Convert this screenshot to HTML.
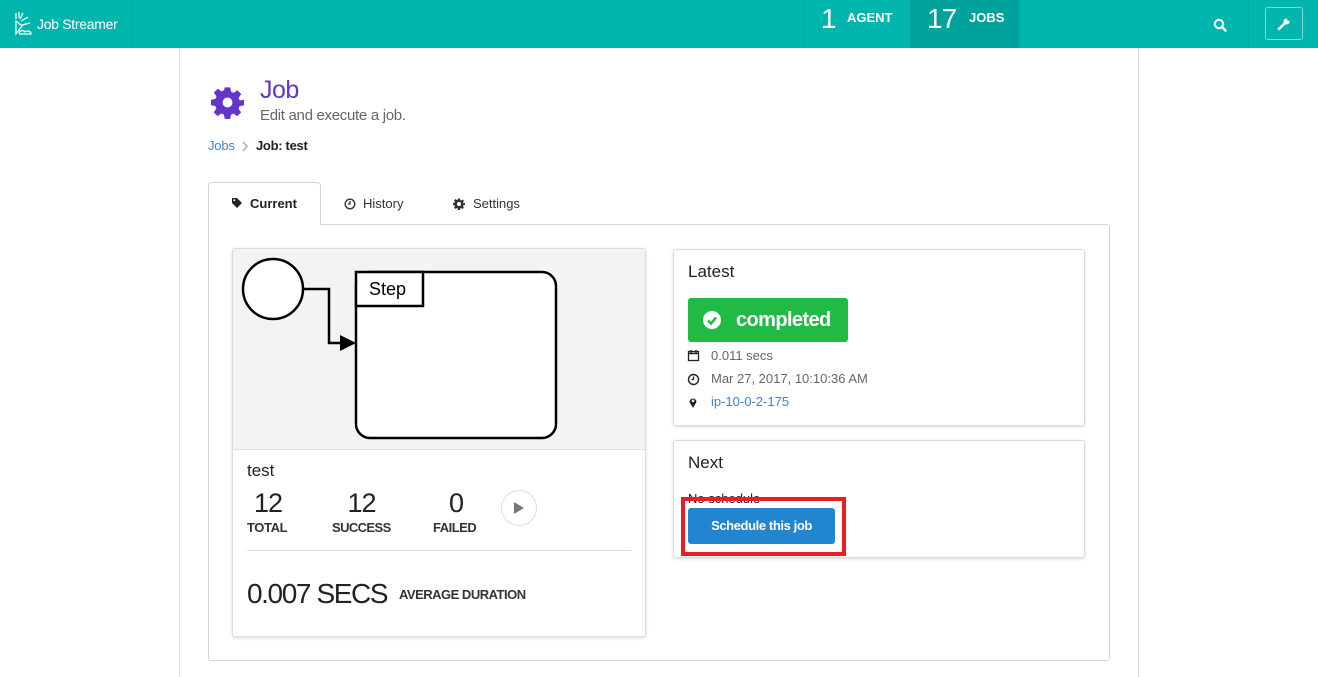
<!DOCTYPE html>
<html><head><meta charset="utf-8"><style>
*{box-sizing:border-box;margin:0;padding:0}
body{width:1318px;height:677px;overflow:hidden;background:#fff;font-family:"Liberation Sans",sans-serif;color:#222;position:relative}
.a{position:absolute}
.hdr{left:0;top:0;width:1318px;height:48px;background:#00b5ad}
.muted{color:#666}
.card{background:#fff;border:1px solid #dcdcdc;border-radius:3px;box-shadow:0 1px 3px rgba(0,0,0,.15)}
</style></head><body>
<div class="a hdr"></div>
<div class="a" style="left:131px;top:0;width:1px;height:48px;background:#00a7a0"></div>
<div class="a" style="left:804px;top:0;width:1px;height:48px;background:#00a7a0"></div>
<div class="a" style="left:910px;top:0;width:109px;height:48px;background:#00a29b"></div>
<div class="a" style="left:1248px;top:0;width:1px;height:48px;background:#00a7a0"></div>
<svg class="a" style="left:13px;top:11px" width="24" height="26" viewBox="0 0 24 26" fill="none" stroke="#fff" stroke-width="1.2">
<path d="M3 2v6M6 1v6M10 2l-3 6M15 6l-7 4M17 12l-8 2M3 10l6 5-6 8z M6 22c1-3 5-3 6-1c2-2 6-1 6 2H6"/></svg>
<div class="a" style="left:37px;top:16px;color:#fff;font-size:14px;letter-spacing:-0.3px">Job Streamer</div>
<div class="a" style="left:821px;top:3px;color:#fff;font-size:28px">1</div>
<div class="a" style="left:847px;top:10px;color:#fff;font-size:13px;font-weight:bold">AGENT</div>
<div class="a" style="left:927px;top:3px;color:#fff;font-size:28px;letter-spacing:-1px">17</div>
<div class="a" style="left:969px;top:10px;color:#fff;font-size:13px;font-weight:bold">JOBS</div>
<svg class="a" style="left:1213px;top:18px" width="14" height="14" viewBox="0 0 14 14"><circle cx="6" cy="6" r="4.2" fill="none" stroke="#fff" stroke-width="2"/><path d="M9 9l3.5 3.5" stroke="#fff" stroke-width="2.4" stroke-linecap="round"/></svg>
<div class="a" style="left:1265px;top:7px;width:38px;height:33px;border:1px solid #7fdad6;border-radius:3px"></div>
<svg class="a" style="left:1276px;top:16px" width="16" height="16" viewBox="0 0 16 16"><path d="M3 13l6-6" stroke="#fff" stroke-width="2.6" stroke-linecap="round"/><circle cx="10.5" cy="5.5" r="3" fill="#fff"/><circle cx="12.5" cy="3.5" r="1.4" fill="#00b5ad"/></svg>

<div class="a" style="left:179px;top:48px;width:1px;height:629px;background:#ddd"></div>
<div class="a" style="left:1138px;top:48px;width:1px;height:629px;background:#ddd"></div>

<svg class="a" style="left:211px;top:86px" width="33" height="33" viewBox="0 0 24 24"><path fill="#6435c9" d="M10 1h4l.6 3.2 1.9.8 2.7-1.9 2.8 2.8-1.9 2.7.8 1.9L24 10v4l-3.2.6-.8 1.9 1.9 2.7-2.8 2.8-2.7-1.9-1.9.8L14 24h-4l-.6-3.2-1.9-.8-2.7 1.9-2.8-2.8 1.9-2.7-.8-1.9L0 14v-4l3.2-.6.8-1.9-1.9-2.7 2.8-2.8 2.7 1.9 1.9-.8z"/><circle cx="12" cy="12" r="3.6" fill="#fff"/></svg>
<div class="a" style="left:260px;top:76px;font-size:25px;color:#6435c9;letter-spacing:-0.5px">Job</div>
<div class="a muted" style="left:260px;top:107px;font-size:15px;letter-spacing:-0.3px">Edit and execute a job.</div>
<div class="a" style="left:208px;top:138px;font-size:13px;color:#4183c4;letter-spacing:-0.2px">Jobs</div>
<svg class="a" style="left:241px;top:141px" width="8" height="11"><path d="M2 1l4 4.5L2 10" stroke="#bbb" stroke-width="2" fill="none"/></svg>
<div class="a" style="left:256px;top:138px;font-size:13px;font-weight:bold;letter-spacing:-0.3px">Job: test</div>

<div class="a" style="left:208px;top:224px;width:902px;height:437px;border:1px solid #d4d4d5;border-radius:0 3px 3px 3px"></div>
<div class="a" style="left:208px;top:182px;width:113px;height:43px;border:1px solid #d4d4d5;border-bottom:none;border-radius:4px 4px 0 0;background:#fff"></div>
<svg class="a" style="left:231px;top:197px" width="12" height="12" viewBox="0 0 12 12"><path d="M1 1h5l5 5-5 5-5-5z" fill="#222"/><circle cx="3.3" cy="3.3" r="1" fill="#fff"/></svg>
<div class="a" style="left:250px;top:196px;font-size:13px;font-weight:bold">Current</div>
<svg class="a" style="left:344px;top:198px" width="12" height="12" viewBox="0 0 12 12"><circle cx="6" cy="6" r="4.8" fill="none" stroke="#333" stroke-width="1.4"/><path d="M6 3v3h-2" stroke="#333" stroke-width="1.3" fill="none"/></svg>
<div class="a" style="left:363px;top:196px;font-size:13px;color:#333">History</div>
<svg class="a" style="left:453px;top:198px" width="12" height="12" viewBox="0 0 24 24"><path fill="#333" d="M10 1h4l.6 3.2 1.9.8 2.7-1.9 2.8 2.8-1.9 2.7.8 1.9L24 10v4l-3.2.6-.8 1.9 1.9 2.7-2.8 2.8-2.7-1.9-1.9.8L14 24h-4l-.6-3.2-1.9-.8-2.7 1.9-2.8-2.8 1.9-2.7-.8-1.9L0 14v-4l3.2-.6.8-1.9-1.9-2.7 2.8-2.8 2.7 1.9 1.9-.8z"/><circle cx="12" cy="12" r="4" fill="#fff"/></svg>
<div class="a" style="left:473px;top:196px;font-size:13px;color:#333">Settings</div>

<div class="a card" style="left:232px;top:248px;width:414px;height:389px"></div>
<div class="a" style="left:233px;top:249px;width:412px;height:201px;background:#f3f3f3;border-bottom:1px solid #e4e4e4"></div>
<svg class="a" style="left:232px;top:248px" width="414" height="204">
<circle cx="41" cy="41" r="30" fill="#fff" stroke="#000" stroke-width="2.5"/>
<path d="M71 41h26v54h12" fill="none" stroke="#000" stroke-width="2.5"/>
<path d="M108 87l16 8-16 8z" fill="#000"/>
<rect x="124" y="24" width="200" height="166" rx="14" fill="#fff" stroke="#000" stroke-width="2.5"/>
<path d="M124 24h67v34h-67z" fill="#fff" stroke="#000" stroke-width="2.5"/>
<text x="137" y="47" font-family="Liberation Sans" font-size="18">Step</text>
</svg>
<div class="a" style="left:247px;top:461px;font-size:17px">test</div>
<div class="a" style="left:243px;top:488px;width:50px;text-align:center;font-size:27px;letter-spacing:-1px">12</div>
<div class="a" style="left:247px;top:520px;font-size:13px;font-weight:bold;color:#333;letter-spacing:-0.4px">TOTAL</div>
<div class="a" style="left:332px;top:488px;width:59px;text-align:center;font-size:27px;letter-spacing:-1px">12</div>
<div class="a" style="left:332px;top:520px;font-size:13px;font-weight:bold;color:#333;letter-spacing:-0.6px">SUCCESS</div>
<div class="a" style="left:433px;top:488px;width:47px;text-align:center;font-size:27px">0</div>
<div class="a" style="left:433px;top:520px;font-size:13px;font-weight:bold;color:#333;letter-spacing:-0.5px">FAILED</div>
<div class="a" style="left:501px;top:490px;width:36px;height:36px;border:1px solid #ddd;border-radius:50%"></div>
<svg class="a" style="left:513px;top:501px" width="12" height="14"><path d="M1 1l10 6-10 6z" fill="#777"/></svg>
<div class="a" style="left:247px;top:550px;width:384px;height:1px;background:#ddd"></div>
<div class="a" style="left:247px;top:578px;font-size:28px;letter-spacing:-1.4px">0.007 SECS</div>
<div class="a" style="left:399px;top:587px;font-size:13px;font-weight:bold;color:#333;letter-spacing:-0.5px">AVERAGE DURATION</div>

<div class="a card" style="left:673px;top:249px;width:412px;height:177px"></div>
<div class="a" style="left:688px;top:262px;font-size:17px">Latest</div>
<div class="a" style="left:688px;top:298px;width:160px;height:44px;background:#21ba45;border-radius:3px"></div>
<svg class="a" style="left:703px;top:311px" width="18" height="18"><circle cx="9" cy="9" r="9" fill="#fff"/><path d="M5 9.5l3 3 5-6" stroke="#21ba45" stroke-width="2.6" fill="none"/></svg>
<div class="a" style="left:736px;top:309px;color:#fff;font-size:20px;font-weight:bold;letter-spacing:-0.6px">completed</div>
<svg class="a" style="left:687px;top:349px" width="13" height="13"><rect x="1.5" y="2.5" width="10" height="9" fill="none" stroke="#222" stroke-width="1.3"/><path d="M1.5 4.5h10M4 1v3M9 1v3" stroke="#222" stroke-width="1.4"/></svg>
<div class="a muted" style="left:711px;top:348px;font-size:13px">0.011 secs</div>
<svg class="a" style="left:687px;top:373px" width="13" height="13"><circle cx="6.5" cy="6.5" r="5" fill="none" stroke="#222" stroke-width="1.4"/><path d="M6.5 3.5v3h-2" stroke="#222" stroke-width="1.3" fill="none"/></svg>
<div class="a muted" style="left:711px;top:371px;font-size:13px">Mar 27, 2017, 10:10:36 AM</div>
<svg class="a" style="left:688px;top:396px" width="10" height="13"><path d="M5 12L1.5 6a3.5 3.5 0 1 1 7 0z" fill="#222"/><circle cx="5" cy="4.8" r="1.3" fill="#fff"/></svg>
<div class="a" style="left:711px;top:394px;font-size:13px;color:#4183c4">ip-10-0-2-175</div>

<div class="a card" style="left:673px;top:440px;width:412px;height:118px"></div>
<div class="a" style="left:688px;top:453px;font-size:17px">Next</div>
<div class="a" style="left:688px;top:491px;font-size:13px;color:#222">No schedule</div>
<div class="a" style="left:681px;top:497px;width:165px;height:59px;border:4px solid #ec1c24"></div>
<div class="a" style="left:688px;top:508px;width:147px;height:36px;background:#2185d0;border-radius:3px;color:#fff;font-size:13px;font-weight:bold;text-align:center;line-height:36px;letter-spacing:-0.4px">Schedule this job</div>
</body></html>
